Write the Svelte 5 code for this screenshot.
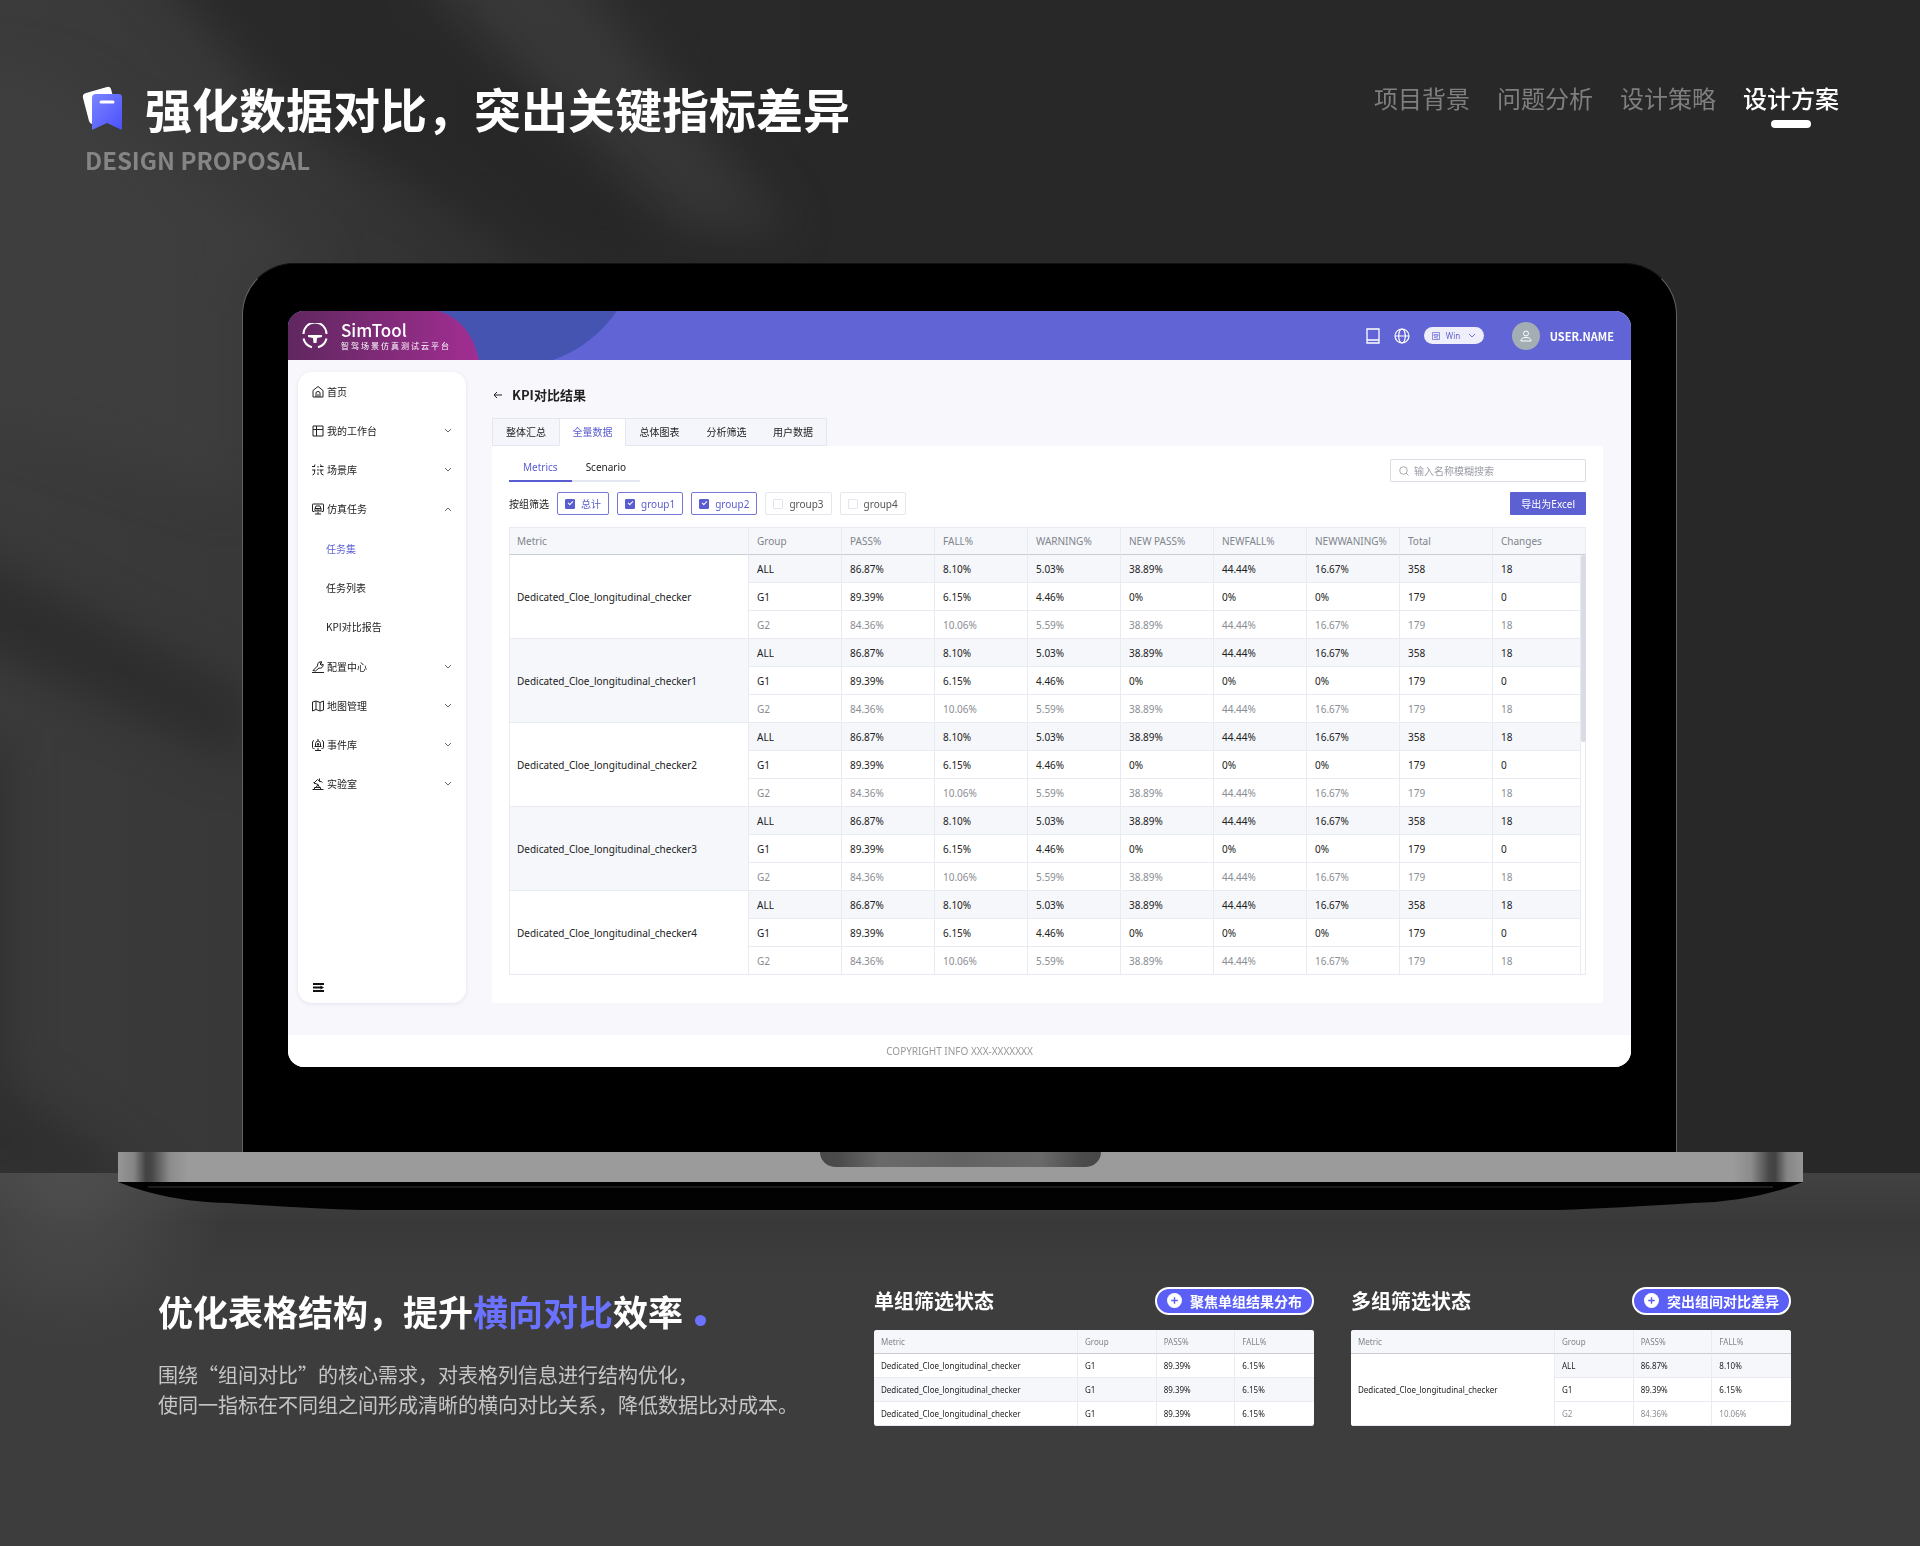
<script lang="ts">
	const sections = ['项目背景', '问题分析', '设计策略', '设计方案'];
	const tabs = ['整体汇总', '全量数据', '总体图表', '分析筛选', '用户数据'];
	const subTabs = ['Metrics', 'Scenario'];

	let tab = $state('全量数据');
	let subTab = $state('Metrics');
	let keyword = $state('');

	let groups = $state([
		{ name: '总计', checked: true },
		{ name: 'group1', checked: true },
		{ name: 'group2', checked: true },
		{ name: 'group3', checked: false },
		{ name: 'group4', checked: false }
	]);

	const menu = [
		{ icon: 'home', label: '首页', arrow: '' },
		{ icon: 'desk', label: '我的工作台', arrow: 'down' },
		{ icon: 'scene', label: '场景库', arrow: 'down' },
		{ icon: 'task', label: '仿真任务', arrow: 'up', children: ['任务集', '任务列表', 'KPI对比报告'] },
		{ icon: 'config', label: '配置中心', arrow: 'down' },
		{ icon: 'map', label: '地图管理', arrow: 'down' },
		{ icon: 'event', label: '事件库', arrow: 'down' },
		{ icon: 'lab', label: '实验室', arrow: 'down' }
	];

	const columns = ['Metric', 'Group', 'PASS%', 'FALL%', 'WARNING%', 'NEW PASS%', 'NEWFALL%', 'NEWWANING%', 'Total', 'Changes'];
	const values = [
		['ALL', '86.87%', '8.10%', '5.03%', '38.89%', '44.44%', '16.67%', '358', '18'],
		['G1', '89.39%', '6.15%', '4.46%', '0%', '0%', '0%', '179', '0'],
		['G2', '84.36%', '10.06%', '5.59%', '38.89%', '44.44%', '16.67%', '179', '18']
	];
	const metric = 'Dedicated_Cloe_longitudinal_checker';
	const metrics = ['', '1', '2', '3', '4'].map((n) => metric + n);
</script>

{#snippet icon(name)}
	<svg class="icon" viewBox="0 0 24 24" fill="none" stroke="currentColor" stroke-width="2" aria-hidden="true">
		{#if name === 'home'}
			<path d="M2 22V9l10-8 10 8v13zM8 22v-8q0-3 4-3t4 3v8M12 22v-6" />
		{:else if name === 'desk'}
			<path d="M2 2h20v20H2zM2 9h20M9 2v20" />
		{:else if name === 'scene'}
			<path d="M0 5h6M0 12h7M5 12v5q0 4-4 5M12 4v3M12 10v4M12 17v5M16 5h7M15 12h8M18 12v5q0 4 5 5M6 1l-2 5M17 1l2 4" />
		{:else if name === 'task'}
			<path d="M5 17H2q-1 0-1-1V3q0-1 1-1h20q1 0 1 1v13q0 1-1 1h-3M12 18v4M6 22h12M6 11l2-5h8l2 5v5H6zM6 11h12M9 14h6" />
		{:else if name === 'config'}
			<path d="M0 23h24M2 19l9-9q-1-6 4-8 3-1 5 0l-4 4 3 3 3-3q1 5-2 7-2 2-6 1l-7 6zM15 2l6 6" />
		{:else if name === 'map'}
			<path d="M1 4l7-2 8 3 7-3v18l-7 2-8-3-7 3zM8 2v17M16 5v17" />
		{:else if name === 'event'}
			<path d="M5 19H3q-2 0-2-2V6q0-2 3-3M19 19h2q2 0 2-2V6q0-2-3-3M12 18v4M6 23h12M5 15h14M7 15V9q1-5 5-5t5 5v6M12 0v4M12 8l-2 4h4z" />
		{:else}
			<path d="M1 23h22M5 23v-4h12v4M8 19l4-6M15 19l-3-6-8-3M4 10l7-7 4 3M3 8l4 4M15 1v6q4-1 6 2" />
		{/if}
	</svg>
{/snippet}

{#snippet chevron(dir)}
	<svg class="chevron" viewBox="0 0 8 8" fill="none" stroke="currentColor" stroke-width="0.900" aria-hidden="true">
		<path d={dir === 'up' ? 'M1 6l3-3 3 3' : 'M1 2l3 3 3-3'} />
	</svg>
{/snippet}

{#snippet pill(text)}
	<button class="pill" type="button">
		<svg viewBox="0 0 16 16" aria-hidden="true">
			<circle cx="8" cy="8" r="8" fill="#fff" />
			<path d="M8 4.500v7M4.500 8h7" stroke="#5b5ff5" stroke-width="1.500" />
		</svg>
		{text}
	</button>
{/snippet}

<div class="page">
	<svg class="wall" viewBox="0 0 1920 1172" preserveAspectRatio="none" aria-hidden="true">
		<defs>
			<linearGradient id="wallTone">
				<stop offset="0" stop-color="#3b3b3b" />
				<stop offset="0.14" stop-color="#383838" />
				<stop offset="0.34" stop-color="#2a2a2a" />
				<stop offset="0.42" stop-color="#282828" />
			</linearGradient>
			<filter id="soft" x="-30%" y="-30%" width="160%" height="160%" color-interpolation-filters="sRGB">
				<feGaussianBlur stdDeviation="24" />
			</filter>
		</defs>
		<rect width="1920" height="1172" fill="url(#wallTone)" />
		<g filter="url(#soft)">
			<path d="M-60 60L60 80 330 270H240V500L-60 400z" fill="#424242" opacity="0.5" />
			<path d="M130-60H420L760 270H560L280 110z" fill="#262626" opacity="0.8" />
			<path d="M400-40H560L790 230H680z" fill="#444" opacity="0.5" />
			<path d="M-60 535L250 695V765L-60 630z" fill="#292929" opacity="0.8" />
			<path d="M-60 740H5V1080L160 1190H-60z" fill="#292929" opacity="0.7" />
		</g>
	</svg>

	<header class="top">
		<div>
			<div class="headline">
				<svg class="mark" viewBox="0 0 40 44" aria-hidden="true">
					<defs>
						<linearGradient id="ribbon" x2="1" y2="1">
							<stop offset="0" stop-color="#7b84ff" />
							<stop offset="1" stop-color="#4b50fb" />
						</linearGradient>
					</defs>
					<path d="M4 7L25 1q3-1 4 2l8 30-27 5q-2 0-3-3L1 12q-1-4 3-5z" fill="#fff" />
					<path d="M14 8h23q3 0 3 3v33l-15-7-15 7V12q0-4 4-4z" fill="url(#ribbon)" />
					<path d="M19 16h12" stroke="#fff" stroke-width="3" stroke-linecap="round" />
				</svg>
				<h1>强化数据对比，突出关键指标差异</h1>
			</div>
			<p class="proposal">DESIGN PROPOSAL</p>
		</div>
		<nav class="sections">
			{#each sections as name}
				<a href="#top" class:current={name === '设计方案'}>{name}</a>
			{/each}
		</nav>
	</header>

	<div class="lid">
		<div class="screen">
			<header class="app-bar">
				<svg class="waves" viewBox="0 0 330 49" aria-hidden="true">
					<defs>
						<linearGradient id="plum">
							<stop offset="0" stop-color="#5f275f" />
							<stop offset="1" stop-color="#a22e93" />
						</linearGradient>
					</defs>
					<path d="M0 0H329Q304 35 265 49H0z" fill="#4553b1" />
					<path d="M0 0H150Q182 9 191 49H0z" fill="url(#plum)" />
				</svg>
				<div class="brand">
					<svg class="wheel" viewBox="0 0 26 26" fill="none" stroke="#fff" aria-hidden="true">
						<path d="M1.500 11A11.500 11.500 0 0 1 24.500 11M1.500 15.500A11.500 11.500 0 0 0 10 24.200M24.500 15.500A11.500 11.500 0 0 1 16 24.200" stroke-width="2" />
						<path d="M6 12h14v2l-5 1-.5 5h-3l-.5-5-5-1z" fill="#fff" stroke="none" />
					</svg>
					<div>
						<strong>SimTool</strong>
						<span>智驾场景仿真测试云平台</span>
					</div>
				</div>
				<div class="tools">
					<button class="plain" type="button" aria-label="文档">
						<svg width="14" height="16" viewBox="0 0 14 16" fill="none" stroke="#fff" stroke-width="1.300" aria-hidden="true">
							<path d="M1 1h12v14H1zM1 12h12" />
						</svg>
					</button>
					<button class="plain" type="button" aria-label="语言">
						<svg width="16" height="16" viewBox="0 0 16 16" fill="none" stroke="#fff" stroke-width="1.200" aria-hidden="true">
							<circle cx="8" cy="8" r="7" />
							<ellipse cx="8" cy="8" rx="3.300" ry="7" />
							<path d="M1 8h14" />
						</svg>
					</button>
					<label class="system">
						<svg width="8" height="8" viewBox="0 0 8 8" fill="none" stroke="currentColor" stroke-width="0.700" aria-hidden="true">
							<path d="M.5.500h7v7h-7zM2 2.500h4v1.500H2zM2 5.500h2M5 4v3.500" />
						</svg>
						<select aria-label="系统">
							<option>Win</option>
							<option>Mac</option>
						</select>
						{@render chevron('down')}
					</label>
					<span class="avatar">
						<svg width="12" height="12" viewBox="0 0 12 12" fill="none" stroke="#fff" aria-hidden="true">
							<circle cx="6" cy="3.500" r="2.500" />
							<path d="M1 11q0-3.500 5-3.500T11 11z" />
						</svg>
					</span>
					<b>USER.NAME</b>
				</div>
			</header>

			<div class="workspace">
				<aside>
					<nav class="menu">
						{#each menu as item}
							<button class="plain item" type="button">
								{@render icon(item.icon)}
								<span>{item.label}</span>
								{#if item.arrow}{@render chevron(item.arrow)}{/if}
							</button>
							{#each item.children ?? [] as child}
								<a href="#task" class:current={child === '任务集'}>{child}</a>
							{/each}
						{/each}
					</nav>
					<button class="plain fold" type="button" aria-label="收起菜单">
						<svg width="11" height="9" viewBox="0 0 11 9" stroke="#111" stroke-width="1.800" fill="none" aria-hidden="true">
							<path d="M0 1h11M0 4.500h8M0 8h11" />
							<path d="M7.500 2.600L11 4.500 7.500 6.400z" fill="#111" stroke="none" />
						</svg>
					</button>
				</aside>

				<main>
					<div class="title">
						<button class="plain" type="button" aria-label="返回">
							<svg width="10" height="8" viewBox="0 0 10 8" fill="none" stroke="#222" aria-hidden="true">
								<path d="M9 4H1M4 1L1 4l3 3" />
							</svg>
						</button>
						<h2>KPI对比结果</h2>
					</div>
					<div class="tabs">
						{#each tabs as name}
							<button type="button" class:active={tab === name} onclick={() => (tab = name)}>{name}</button>
						{/each}
					</div>
					<div class="panel">
						<div class="bar">
							<div class="sub-tabs">
								{#each subTabs as name}
									<button type="button" class:active={subTab === name} onclick={() => (subTab = name)}>{name}</button>
								{/each}
							</div>
							<label class="search">
								<svg width="10" height="10" viewBox="0 0 10 10" fill="none" stroke="#8f939b" stroke-width="0.800" aria-hidden="true">
									<circle cx="4.500" cy="4.500" r="3.800" />
									<path d="M7.200 7.200L9.500 9.500" />
								</svg>
								<input type="text" placeholder="输入名称模糊搜索" aria-label="输入名称模糊搜索" bind:value={keyword} />
							</label>
						</div>
						<div class="bar">
							<div class="filters">
								<span>按组筛选</span>
								{#each groups as group}
									<label class:on={group.checked}>
										<input type="checkbox" bind:checked={group.checked} />
										{group.name}
									</label>
								{/each}
							</div>
							<button class="export" type="button">导出为Excel</button>
						</div>
						<div class="grid">
							<table class="full">
								<thead>
									<tr>
										{#each columns as column}<th>{column}</th>{/each}
									</tr>
								</thead>
								<tbody>
									{#each metrics as name, m}
										{#each values as row, r}
											<tr class:total={r === 0} class:muted={r === 2}>
												{#if r === 0}<td class="metric" class:odd={m % 2} rowspan="3">{name}</td>{/if}
												{#each row as value}<td>{value}</td>{/each}
											</tr>
										{/each}
									{/each}
								</tbody>
							</table>
							<div class="track"><div class="thumb"></div></div>
						</div>
					</div>
				</main>
			</div>
			<footer>COPYRIGHT INFO XXX-XXXXXXX</footer>
		</div>
	</div>

	<div class="lower">
		<div class="base">
			<div class="deck"><div class="notch"></div></div>
			<svg class="belly" viewBox="0 0 1685 28" preserveAspectRatio="none" aria-hidden="true">
				<path d="M0 0H1685Q1635 20 1575 21Q1500 26 1440 28H245Q185 26 110 21Q50 20 0 0z" fill="#020202" />
				<path d="M30 5H1655" stroke="#1b1d1d" stroke-width="2" />
			</svg>
		</div>

		<section class="notes">
			<div class="copy">
				<h2>优化表格结构，提升<em>横向对比</em>效率<i></i></h2>
				<p>围绕“组间对比”的核心需求，对表格列信息进行结构优化，<br />使同一指标在不同组之间形成清晰的横向对比关系，降低数据比对成本。</p>
			</div>
			<article>
				<header>
					<h3>单组筛选状态</h3>
					{@render pill('聚焦单组结果分布')}
				</header>
				<table class="mini">
					<thead>
						<tr>{#each columns.slice(0, 4) as column}<th>{column}</th>{/each}</tr>
					</thead>
					<tbody>
						{#each [0, 1, 2] as n}
							<tr class:total={n === 1}>
								<td class="metric" class:odd={n === 1}>{metric}</td>
								{#each values[1].slice(0, 3) as value}<td>{value}</td>{/each}
							</tr>
						{/each}
					</tbody>
				</table>
			</article>
			<article>
				<header>
					<h3>多组筛选状态</h3>
					{@render pill('突出组间对比差异')}
				</header>
				<table class="mini">
					<thead>
						<tr>{#each columns.slice(0, 4) as column}<th>{column}</th>{/each}</tr>
					</thead>
					<tbody>
						{#each values as row, r}
							<tr class:total={r === 0} class:muted={r === 2}>
								{#if r === 0}<td class="metric" rowspan="3">{metric}</td>{/if}
								{#each row.slice(0, 3) as value}<td>{value}</td>{/each}
							</tr>
						{/each}
					</tbody>
				</table>
			</article>
		</section>
	</div>
</div>

<style>
	:global(body) {
		margin: 0;
		background: #3d3d3d;
	}
	.page {
		position: relative;
		z-index: 0;
		display: flex;
		flex-direction: column;
		min-height: 100vh;
		color: #fff;
		font-family: 'Noto Sans CJK SC', sans-serif;
	}
	.page :is(h1, h2, h3, p) {
		margin: 0;
	}
	.page :is(button, input, select) {
		font: inherit;
		color: inherit;
	}
	.page a {
		color: inherit;
		text-decoration: none;
	}
	svg {
		display: block;
		flex: none;
	}
	.plain {
		display: flex;
		align-items: center;
		padding: 0;
		border: 0;
		background: none;
	}
	.wall {
		position: absolute;
		top: 0;
		left: 0;
		z-index: -2;
		width: 100%;
		height: 1173px;
	}

	/* page heading */
	.top {
		display: flex;
		justify-content: space-between;
		padding: 80px 81px 88px 82px;
	}
	.headline {
		display: flex;
		align-items: center;
		gap: 23px;
	}
	.mark {
		width: 40px;
		height: 44px;
	}
	h1 {
		font-size: 47px;
		line-height: 56px;
		font-weight: 700;
	}
	.top .proposal {
		margin-top: 9px;
		padding-left: 3px;
		font-size: 24px;
		line-height: 30px;
		font-weight: 700;
		color: #858585;
	}
	.sections {
		display: flex;
		align-items: flex-start;
		gap: 27px;
		padding-top: 3px;
		font-size: 24px;
		line-height: 30px;
		color: #7f7f7f;
	}
	.sections .current {
		font-weight: 500;
		color: #fff;
	}
	.sections .current::after {
		content: '';
		display: block;
		width: 40px;
		height: 8px;
		margin: 7px auto 0;
		border-radius: 4px;
		background: #fff;
	}

	/* laptop */
	.lid {
		margin: 0 243px 0 242px;
		padding: 47px 45px 85px;
		border: solid #636363;
		border-width: 1px 1px 0;
		border-top-color: #111;
		border-radius: 52px 52px 0 0;
		background: #000;
	}
	.lower {
		position: relative;
		flex: 1;
	}
	.lower::before {
		content: '';
		position: absolute;
		inset: 21px 0 0;
		z-index: -1;
		background:
			radial-gradient(160px 170px at 70px 0, #4e4e4e, transparent),
			linear-gradient(#424242, #393939 50px, #3d3d3d 110px);
	}
	.base {
		margin: 0 117px 0 118px;
	}
	.deck {
		height: 30px;
		background: linear-gradient(90deg, #969696, #858585 16px, #424242 28px, #484848 34px, #8c8c8c 52px, #9b9b9c 70px, #9b9b9c calc(100% - 70px), #8c8c8c calc(100% - 52px), #484848 calc(100% - 34px), #424242 calc(100% - 28px), #858585 calc(100% - 16px), #969696);
	}
	.notch {
		width: 281px;
		height: 15px;
		margin: 0 auto;
		border-radius: 0 0 18px 18px;
		background: linear-gradient(90deg, #474747, #4b4b4b 20px, #6a6a6a 60px, #626262 50%, #6a6a6a calc(100% - 60px), #4b4b4b calc(100% - 20px), #474747);
	}
	.belly {
		width: 100%;
		height: 28px;
	}

	/* application */
	.screen {
		overflow: hidden;
		border-radius: 16px;
		background: #f7f7fc;
		color: #222;
		font-family: 'Noto Sans', 'Noto Sans CJK SC', sans-serif;
		font-size: 10px;
		line-height: 14px;
	}
	.app-bar {
		position: relative;
		display: flex;
		align-items: center;
		justify-content: space-between;
		height: 49px;
		padding: 0 17px 0 14px;
		background: #6164d4;
		color: #fff;
	}
	.waves {
		position: absolute;
		top: 0;
		left: 0;
		width: 330px;
		height: 49px;
	}
	.brand {
		position: relative;
		display: flex;
		align-items: center;
		gap: 13px;
		font-family: 'Noto Sans CJK SC', sans-serif;
	}
	.wheel {
		width: 26px;
		height: 26px;
	}
	.brand strong {
		display: block;
		font-size: 17px;
		line-height: 20px;
		font-weight: 500;
	}
	.brand span {
		display: block;
		font-size: 8px;
		line-height: 12px;
		letter-spacing: 2px;
	}
	.tools {
		display: flex;
		align-items: center;
		gap: 14px;
	}
	.system {
		display: flex;
		align-items: center;
		gap: 6px;
		height: 17px;
		margin-right: 14px;
		padding: 0 8px;
		border-radius: 9px;
		background: #efeffb;
		color: #6164d4;
		font-size: 8px;
	}
	.system select {
		appearance: none;
		width: 16px;
		padding: 0;
		border: 0;
		background: none;
	}
	.avatar {
		display: grid;
		place-items: center;
		width: 28px;
		height: 28px;
		border-radius: 50%;
		background: #a3adb4;
	}
	.tools b {
		margin-left: -4px;
		font-family: 'Noto Sans CJK SC', sans-serif;
		font-size: 11px;
		font-weight: 700;
	}
	.workspace {
		display: flex;
		gap: 26px;
		padding: 12px 28px 32px 10px;
	}
	aside {
		display: flex;
		flex-direction: column;
		justify-content: space-between;
		width: 168px;
		border-radius: 14px;
		background: #fff;
		box-shadow: 0 1px 4px rgba(80, 80, 130, 0.12);
		font-family: 'Noto Sans CJK SC', sans-serif;
	}
	.menu {
		display: grid;
		grid-auto-rows: 1fr;
		align-items: center;
		height: 432px;
		padding: 0 14px;
	}
	.item {
		gap: 3px;
	}
	.item span {
		flex: 1;
		text-align: left;
	}
	.icon {
		width: 12px;
		height: 12px;
	}
	.chevron {
		width: 8px;
		height: 8px;
	}
	.item .chevron {
		color: #555;
	}
	.menu a {
		padding-left: 14px;
	}
	.menu .current {
		color: #6164d4;
	}
	.fold {
		margin: 0 0 11px 15px;
	}
	main {
		flex: 1;
		min-width: 0;
	}
	.title {
		display: flex;
		align-items: center;
		gap: 9px;
		height: 46px;
		padding-left: 1px;
	}
	.title h2 {
		font-family: 'Noto Sans CJK SC', sans-serif;
		font-size: 13px;
		line-height: 18px;
		font-weight: 700;
	}
	.tabs {
		display: flex;
		height: 28px;
	}
	.tabs button {
		width: 67px;
		padding: 0;
		border: 1px solid #e4e6f0;
		border-width: 1px 0;
		background: #f5f6fb;
	}
	.tabs button:first-child {
		border-left-width: 1px;
	}
	.tabs button:last-child {
		border-right-width: 1px;
	}
	.tabs .active {
		border-color: #e4e6f0 #e4e6f0 #fff;
		border-width: 1px;
		background: #fff;
		color: #5a5dd0;
	}
	.panel {
		padding: 13px 17px 28px;
		background: #fff;
	}
	.bar {
		display: flex;
		align-items: center;
		justify-content: space-between;
		height: 23px;
		margin-bottom: 10px;
	}
	.sub-tabs {
		display: flex;
		align-self: flex-end;
	}
	.sub-tabs button {
		padding: 0 14px 6px;
		border: 0;
		border-bottom: 2px solid #e4e6f0;
		background: none;
	}
	.sub-tabs .active {
		border-color: #5a5dd0;
		color: #5a5dd0;
	}
	.search {
		display: flex;
		align-items: center;
		gap: 5px;
		box-sizing: border-box;
		width: 196px;
		height: 23px;
		padding: 0 8px;
		border: 1px solid #dcdde4;
		border-radius: 1px;
	}
	.search input {
		flex: 1;
		min-width: 0;
		padding: 0;
		border: 0;
		outline: 0;
		background: none;
	}
	.search input::placeholder {
		color: #9b9ea6;
	}
	.filters {
		display: flex;
		align-items: center;
		gap: 8px;
	}
	.filters label {
		display: flex;
		align-items: center;
		gap: 6px;
		box-sizing: border-box;
		height: 23px;
		padding: 0 7px;
		border: 1px solid #e4e6ee;
		border-radius: 2px;
		color: #555;
	}
	.filters .on {
		border-color: #7578d8;
		color: #5a5dd0;
	}
	.filters input {
		appearance: none;
		display: grid;
		place-items: center;
		box-sizing: border-box;
		width: 10px;
		height: 10px;
		margin: 0;
		border: 1px solid #e4e6ee;
		border-radius: 1px;
	}
	.filters input:checked {
		border-color: #5a5dd0;
		background: #5a5dd0;
	}
	.filters input:checked::after {
		content: '';
		width: 4px;
		height: 2px;
		border: solid #fff;
		border-width: 0 0 1px 1px;
		transform: translateY(-1px) rotate(-45deg);
	}
	.page .export {
		height: 23px;
		padding: 0 11px;
		border: 0;
		border-radius: 1px;
		background: #5d60d2;
		color: #fff;
	}

	/* tables */
	.grid {
		position: relative;
		padding-top: 2px;
	}
	table {
		width: 100%;
		table-layout: fixed;
		border-collapse: separate;
		border-spacing: 0;
		background: #fff;
		color: #222;
		font-family: 'Noto Sans', 'Noto Sans CJK SC', sans-serif;
	}
	th,
	td {
		box-sizing: border-box;
		padding: 0 0 0 8px;
		border: solid #e9ebf3;
		border-width: 0 1px 1px 0;
		text-align: left;
		white-space: nowrap;
	}
	th {
		border-bottom-color: #c9ccd3;
		background: #f5f7fb;
		color: #80848b;
		font-weight: 400;
	}
	.total td,
	.metric.odd {
		background: #f5f7fb;
	}
	.total .metric:not(.odd) {
		background: #fff;
	}
	.muted td {
		color: #8a8d94;
	}
	.full :is(th, td) {
		height: 28px;
	}
	.full th {
		border-top-width: 1px;
	}
	.full th:first-child {
		width: 240px;
	}
	.full :is(th:first-child, .metric) {
		padding-left: 7px;
		border-left-width: 1px;
	}
	.track {
		position: absolute;
		top: 30px;
		right: 0;
		bottom: 0;
		box-sizing: border-box;
		width: 6px;
		border: solid #e9ebf3;
		border-width: 0 1px 1px;
		background: #fff;
	}
	.thumb {
		height: 187px;
		margin: 0 -1px 0 0;
		border-radius: 3px;
		background: #d9dbe5;
	}
	footer {
		background: #fff;
		color: #999;
		line-height: 32px;
		text-align: center;
	}

	/* notes under the laptop */
	.notes {
		display: flex;
		gap: 37px;
		padding: 77px 129px 60px 158px;
	}
	.copy {
		flex: 1;
		padding-top: 2px;
	}
	.copy h2 {
		font-size: 35px;
		line-height: 44px;
		font-weight: 700;
	}
	.copy em {
		font-style: normal;
		color: #6b72ff;
	}
	.copy i {
		display: inline-block;
		width: 11px;
		height: 11px;
		margin-left: 12px;
		border-radius: 50%;
		background: #6b72ff;
	}
	.copy p {
		margin-top: 27px;
		font-size: 20px;
		line-height: 30px;
		font-weight: 400;
		color: #c6c6c6;
		white-space: nowrap;
	}
	article {
		flex: 0 1 440px;
	}
	article header {
		display: flex;
		align-items: center;
		justify-content: space-between;
		height: 27px;
		margin-bottom: 16px;
	}
	article h3 {
		font-size: 20px;
		line-height: 27px;
		font-weight: 700;
	}
	.page .pill {
		display: flex;
		align-items: center;
		gap: 8px;
		height: 28px;
		padding: 0 10px;
		border: 2px solid #fff;
		border-radius: 14px;
		background: #5b5ff5;
		font-size: 14px;
		line-height: 20px;
		font-weight: 700;
	}
	.pill svg {
		width: 15px;
		height: 15px;
	}
	.mini {
		overflow: hidden;
		border-radius: 3px;
		font-size: 8px;
		line-height: 12px;
	}
	.mini :is(th, td) {
		height: 24px;
		padding-left: 7px;
	}
	.mini th:first-child {
		width: 204px;
	}
	.mini :is(th, td):last-child {
		border-right: 0;
	}
</style>
